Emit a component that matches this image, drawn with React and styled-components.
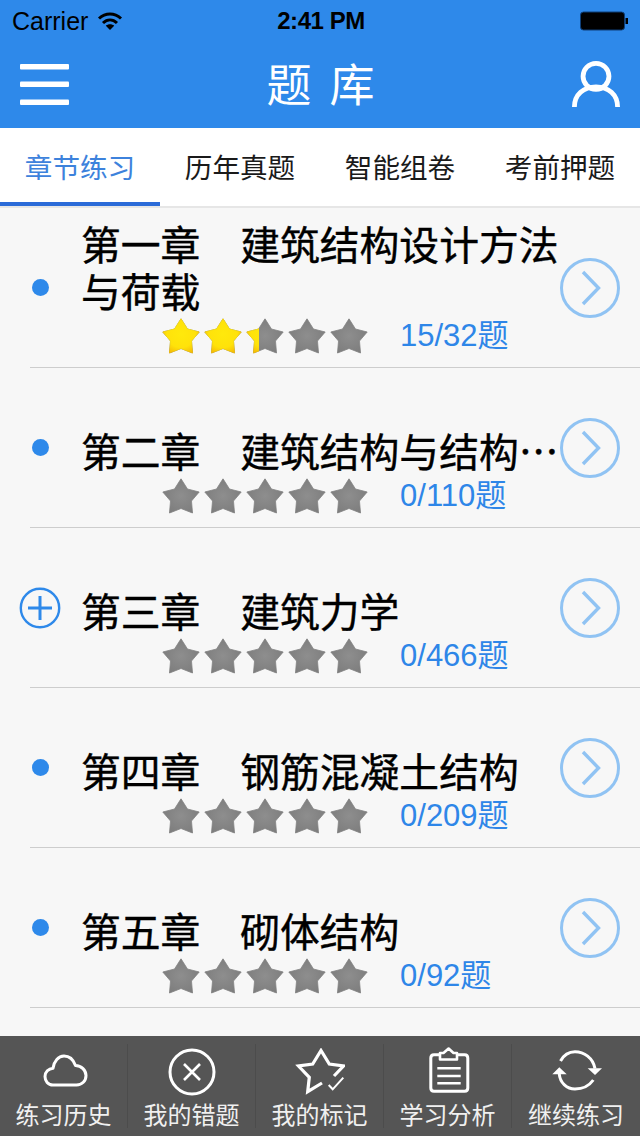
import React from "react";
import styled, { createGlobalStyle } from "styled-components";

const Global = createGlobalStyle`
  html, body { margin: 0; padding: 0; background: #f7f7f7; }
  * { box-sizing: border-box; }
`;

const LATIN = `"Liberation Sans", "Noto Sans CJK SC", sans-serif`;

const Screen = styled.div`
  width: 640px;
  height: 1136px;
  display: flex;
  flex-direction: column;
  overflow: hidden;
  background: #f7f7f7;
  font-family: ${LATIN};
`;

const Header = styled.header`
  background: #2e89ea;
  height: 128px;
  display: flex;
  flex-direction: column;
`;

const StatusBar = styled.div`
  height: 40px;
  display: grid;
  grid-template-columns: 1fr auto 1fr;
  align-items: center;
  padding: 2px 10px 0 12px;
  color: #000;
  font-size: 25px;
`;

const Carrier = styled.div`
  display: flex;
  align-items: center;
  gap: 9px;
`;

const Clock = styled.div`
  font-size: 24px;
  font-weight: 700;
  letter-spacing: -0.45px;
`;

const Battery = styled.svg`
  justify-self: end;
`;

const NavBar = styled.div`
  flex: 1;
  display: flex;
  align-items: center;
  justify-content: space-between;
  padding: 0 20px;
`;

const Burger = styled.svg`
  margin-top: 2px;
`;

const NavTitle = styled.h1`
  margin: -4px 0 0;
  font-size: 45px;
  font-weight: 400;
  color: #fff;
  word-spacing: 8px;
  font-family: "Noto Sans CJK SC", sans-serif;
  line-height: 1;
`;

const Tabs = styled.nav`
  height: 80px;
  display: grid;
  grid-template-columns: repeat(4, 160px);
  background: #fff;
  border-bottom: 2px solid #e6e6e6;
`;

const Tab = styled.div`
  display: flex;
  align-items: center;
  justify-content: center;
  padding-top: 2px;
  font-family: "Noto Sans CJK SC", sans-serif;
  font-size: 27.6px;
  color: ${(p) => (p.$active ? "#3d82dc" : "#1a1a1a")};
  border-bottom: 4px solid ${(p) => (p.$active ? "#2b6bd8" : "transparent")};
`;

const List = styled.main`
  flex: 1;
  display: flex;
  flex-direction: column;
`;

const Row = styled.section`
  height: 160px;
  flex: none;
  margin-left: 30px;
  display: flex;
  align-items: center;
  border-bottom: 1.5px solid #cdcdcd;
`;

const MarkerSlot = styled.div`
  width: 20px;
  flex: none;
  margin-right: 31px;
  display: flex;
  justify-content: center;
`;

const Dot = styled.span`
  flex: none;
  width: 17px;
  height: 17px;
  border-radius: 50%;
  background: #2e89ea;
`;

const Body = styled.div`
  width: 479px;
  flex: none;
  height: 100%;
  display: flex;
  flex-direction: column;
  justify-content: flex-end;
  padding-bottom: 12px;
`;

const Title = styled.div`
  font-family: "Noto Sans CJK SC", sans-serif;
  font-size: 39.8px;
  font-weight: 400;
  -webkit-text-stroke: 0.4px #000;
  line-height: 47px;
  color: #000;
  ${(p) =>
    p.$single
      ? "white-space: nowrap; overflow: hidden; text-overflow: ellipsis;"
      : ""}
`;

const Stats = styled.div`
  display: flex;
  align-items: center;
  margin: 4px 0 0 81px;
  gap: 32px;
  height: 38px;
`;

const StarTrack = styled.div`
  position: relative;
  width: 206px;
  height: 36px;
`;

const StarLine = styled.div`
  display: flex;
  gap: 4px;
  width: 206px;
  height: 36px;
`;

const GoldLayer = styled.div`
  position: absolute;
  left: 0;
  top: 0;
  height: 36px;
  overflow: hidden;
`;

const Count = styled.div`
  font-size: 31px;
  color: #2e86e8;
  line-height: 38px;
  white-space: nowrap;
`;

const Go = styled.svg`
  flex: none;
  margin-left: -1px;
`;

const TabBar = styled.footer`
  height: 100px;
  flex: none;
  background: #555;
  display: grid;
  grid-template-columns: repeat(5, 128px);
  padding: 8px 0;
`;

const TabItem = styled.div`
  display: flex;
  flex-direction: column;
  align-items: center;
  justify-content: space-between;
  height: 84px;
  border-right: 1.5px solid #4c4c4c;
  &:last-child { border-right: none; }
`;

const IconBox = styled.div`
  height: 56px;
  display: flex;
  align-items: center;
  justify-content: center;
`;

const TabLabel = styled.div`
  font-family: "Noto Sans CJK SC", sans-serif;
  font-size: 24px;
  line-height: 28px;
  color: #f0f0f0;
`;

const STAR =
  "M19 0.8 L25.5 11 L37.2 14 L29.5 23 L30.5 35 L19 30.5 L7.5 35 L8.5 23 L0.8 14 L12.5 11 Z";

function Star({ gold }) {
  const id = gold ? "goldFill" : "greyFill";
  return (
    <svg width="38" height="36" viewBox="0 0 38 36" style={{ flex: "none" }}>
      <defs>
        {gold ? (
          <radialGradient id={id} cx="50%" cy="45%" r="60%">
            <stop offset="0%" stopColor="#ffe90c" />
            <stop offset="65%" stopColor="#ffe20a" />
            <stop offset="100%" stopColor="#f5bc05" />
          </radialGradient>
        ) : (
          <radialGradient id={id} cx="50%" cy="50%" r="58%">
            <stop offset="0%" stopColor="#8e8e8e" />
            <stop offset="100%" stopColor="#7c7c7c" />
          </radialGradient>
        )}
      </defs>
      <path d={STAR} fill={`url(#${id})`} stroke={`url(#${id})`} strokeWidth="0.8" strokeLinejoin="round" />
    </svg>
  );
}

function Stars({ done, total }) {
  const five = [0, 1, 2, 3, 4];
  return (
    <StarTrack>
      <StarLine>{five.map((i) => <Star key={i} />)}</StarLine>
      {done > 0 && (
        <GoldLayer style={{ width: `${(done / total) * 206}px` }}>
          <StarLine>{five.map((i) => <Star key={i} gold />)}</StarLine>
        </GoldLayer>
      )}
    </StarTrack>
  );
}

const Plus = () => (
  <svg width="42" height="42" viewBox="0 0 42 42" style={{ flex: "none" }} fill="none" stroke="#2e89ea">
    <circle cx="21" cy="21" r="19.2" strokeWidth="2.4" />
    <path d="M9 21H33M21 9V33" strokeWidth="3" />
  </svg>
);

const Chevron = () => (
  <Go width="62" height="62" viewBox="0 0 62 62" fill="none" stroke="#90c3f3">
    <circle cx="31" cy="31" r="28.5" strokeWidth="3" />
    <path d="M24 15L39.5 31L24 47" strokeWidth="3.4" />
  </Go>
);

const Cloud = () => (
  <svg width="48" height="36" viewBox="0 0 48 36" fill="none" stroke="#fff" strokeWidth="3" strokeLinejoin="round">
    <path d="M13 31C8 31 5 27 5 22.5C5 18 8.5 14.5 13 14.2C14 7 18.5 2 24 2C29.5 2 33.5 6 35.5 11.5C41.5 11.5 46 16.5 46 21.5C46 27 42 31 36.5 31Z" />
  </svg>
);

const CircleX = () => (
  <svg width="48" height="48" viewBox="0 0 48 48" fill="none" stroke="#fff">
    <circle cx="24" cy="24" r="22" strokeWidth="3" />
    <path d="M16 16L32 32M32 16L16 32" strokeWidth="2.6" />
  </svg>
);

const StarCheck = () => (
  <svg width="50" height="48" viewBox="0 0 50 48" fill="none" stroke="#fff" strokeLinejoin="miter">
    <path d="M27 35L12.7 43.7L14.3 29.3L3.5 18L17.7 16L26 2.5L34.3 16L48.5 18L39 28" strokeWidth="3.2" />
    <path d="M33.7 37L37.7 41.3L48.3 29.7" strokeWidth="2" />
  </svg>
);

const Clipboard = () => (
  <svg width="44" height="50" viewBox="0 0 44 50" fill="none" stroke="#fff">
    <path d="M14 7.8H8C6 7.8 4.8 9 4.8 11V41C4.8 43 6 44.2 8 44.2H38.6C40.6 44.2 41.8 43 41.8 41V11C41.8 9 40.6 7.8 38.6 7.8H31" strokeWidth="3" />
    <path d="M14 12.5V6H17.5L22.6 1.5L27.5 6H31V12.5Z" strokeWidth="2.6" strokeLinejoin="round" />
    <path d="M11.3 21.3H34.7M11.3 29H34.7M11.3 36.3H34.7" strokeWidth="2.6" />
  </svg>
);

const Refresh = () => (
  <svg width="52" height="44" viewBox="0 0 52 44" fill="none">
    <path d="M10.5 11C14 4.5 19 1.7 25 1.7C34 1.7 43 8 45 18.5" stroke="#fff" strokeWidth="3" />
    <path d="M9.3 24C10 33 17 39 25 39C32 39 39 36 43.3 30" stroke="#fff" strokeWidth="3" />
    <path d="M37.7 18.3H52L45 25Z" fill="#fff" />
    <path d="M2.3 24.3H16.7L9.3 17.3Z" fill="#fff" />
  </svg>
);

const CHAPTERS = [
  { title: "第一章　建筑结构设计方法与荷载", done: 15, total: 32 },
  { title: "第二章　建筑结构与结构设计原理", done: 0, total: 110, single: true },
  { title: "第三章　建筑力学", done: 0, total: 466, plus: true },
  { title: "第四章　钢筋混凝土结构", done: 0, total: 209 },
  { title: "第五章　砌体结构", done: 0, total: 92 },
];

const TABS = ["章节练习", "历年真题", "智能组卷", "考前押题"];

const ACTIONS = [
  ["练习历史", Cloud],
  ["我的错题", CircleX],
  ["我的标记", StarCheck],
  ["学习分析", Clipboard],
  ["继续练习", Refresh],
];

export default function App() {
  return (
    <Screen>
      <Global />
      <Header>
        <StatusBar>
          <Carrier>
            <span>Carrier</span>
            <svg width="26" height="20" viewBox="0 0 26 20" fill="none" stroke="#000" strokeWidth="3">
              <path d="M2 7.5C8.5 1.5 17.5 1.5 24 7.5" />
              <path d="M6 12C10.3 8 15.7 8 20 12" />
              <path d="M13 19L8.8 14.8C11 12.8 15 12.8 17.2 14.8Z" fill="#000" stroke="none" />
            </svg>
          </Carrier>
          <Clock>2:41 PM</Clock>
          <Battery width="50" height="20" viewBox="0 0 50 20">
            <rect x="0.5" y="1" width="44" height="18" rx="3" fill="#000" stroke="#0f3f78" />
            <rect x="45.5" y="7" width="2.5" height="6" fill="#000" />
          </Battery>
        </StatusBar>
        <NavBar>
          <Burger width="49" height="42" viewBox="0 0 49 42" fill="#fff">
            <rect y="0" width="49" height="5.5" rx="1" />
            <rect y="17.5" width="49" height="5.5" rx="1" />
            <rect y="35.5" width="49" height="5.5" rx="1" />
          </Burger>
          <NavTitle>题 库</NavTitle>
          <svg width="48" height="48" viewBox="0 0 50 50" fill="none" stroke="#fff" strokeWidth="5">
            <circle cx="25" cy="17" r="13.5" />
            <path d="M2.5 49C2.5 36 12 28 25 28C38 28 47.5 36 47.5 49" />
          </svg>
        </NavBar>
      </Header>
      <Tabs>
        {TABS.map((t, i) => (
          <Tab key={t} $active={i === 0}>{t}</Tab>
        ))}
      </Tabs>
      <List>
        {CHAPTERS.map((c) => (
          <Row key={c.title}>
            <MarkerSlot>{c.plus ? <Plus /> : <Dot />}</MarkerSlot>
            <Body>
              <Title $single={c.single}>{c.title}</Title>
              <Stats>
                <Stars done={c.done} total={c.total} />
                <Count>{c.done}/{c.total}题</Count>
              </Stats>
            </Body>
            <Chevron />
          </Row>
        ))}
      </List>
      <TabBar>
        {ACTIONS.map(([label, Icon]) => (
          <TabItem key={label}>
            <IconBox><Icon /></IconBox>
            <TabLabel>{label}</TabLabel>
          </TabItem>
        ))}
      </TabBar>
    </Screen>
  );
}
